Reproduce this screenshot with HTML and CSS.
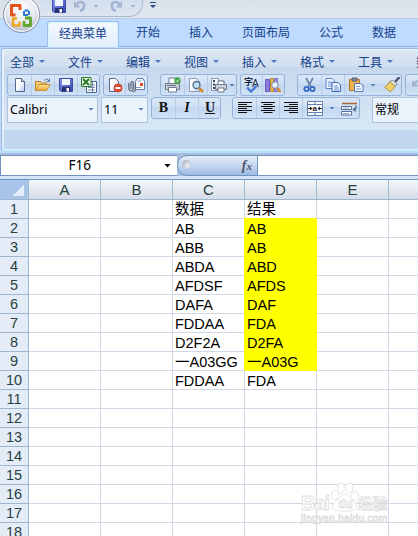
FILE: index.html
```html
<!DOCTYPE html>
<html lang="zh-CN">
<head>
    <meta charset="UTF-8">
    <meta name="viewport" content="width=device-width, initial-scale=1.0">
    <title>Excel</title>
    <link rel="stylesheet" href="styles.css">
</head>
<body>
    <!-- shared icons -->
    <svg class="defs">
        <defs>
            <linearGradient id="sheet" x1="0" y1="0" x2="1" y2="1"><stop offset=".4" stop-color="#fff"/><stop offset="1" stop-color="#b9cdea"/></linearGradient>
            <linearGradient id="blue" x1="0" y1="0" x2="1" y2="1"><stop offset="0" stop-color="#8c9cf0"/><stop offset="1" stop-color="#3444ac"/></linearGradient>
            <linearGradient id="gold" x1="0" y1="0" x2="0" y2="1"><stop offset="0" stop-color="#ffe9a0"/><stop offset="1" stop-color="#eaa32c"/></linearGradient>
            <radialGradient id="orb" cx=".5" cy=".35" r=".65"><stop offset="0" stop-color="#fff"/><stop offset=".6" stop-color="#e6e9ef"/><stop offset="1" stop-color="#a9b2c3"/></radialGradient>
        </defs>
        <symbol id="save" viewBox="0 0 16 16">
            <path d="M1.500 1.500h13v13H3l-1.500-1.500z" fill="url(#blue)" stroke="#3f4ba8"/>
            <path d="M4 2h8v6H4z" fill="#f1f5ff"/>
            <path d="M4 10h8v4.500H4z" fill="#26306f"/>
            <path d="M8.500 11h2.500v3.500H8.500z" fill="#fff"/>
        </symbol>
        <symbol id="undo" viewBox="0 0 16 16">
            <path d="M4 7c4-5 9-3 8 2q-.5 3-4 4" fill="none" stroke="#a3b5d2" stroke-width="2.500"/>
            <path d="M2 3v6.500h6.500z" fill="#a3b5d2"/>
        </symbol>
    </svg>

    <div class="title-bar">
        <div class="quick-access">
            <svg width="16" height="16"><use href="#save"/></svg>
            <svg class="undo" width="16" height="16"><use href="#undo"/></svg>
            <i class="arrow pale"></i>
            <svg class="redo" width="16" height="16"><use href="#undo"/></svg>
            <i class="arrow pale"></i>
        </div>
        <i class="arrow customize"></i>
    </div>
    <svg class="office-button" width="42" height="36" viewBox="0 0 42 36">
        <circle cx="21.500" cy="14.500" r="18" fill="url(#orb)" stroke="#8290aa"/>
        <circle cx="21.500" cy="14.500" r="16.700" fill="none" stroke="#fff" stroke-width="1.200"/>
        <g fill="none" stroke-linejoin="round">
            <path d="M15.500 15h-4V5.500H20V10" stroke="#e2501c" stroke-width="3"/>
            <path d="M24 15v-4.500h5V15z" stroke="#2f78d0" stroke-width="2" stroke-dasharray="4 1"/>
            <path d="M17 18.500h-4v7h6.500v-4" stroke="#f0a51e" stroke-width="2.400"/>
            <path d="M24 21v4.500h6.500V18H25" stroke="#5fa52e" stroke-width="2.800"/>
        </g>
    </svg>

    <div class="tabs">
        <div class="tab active">经典菜单</div>
        <div class="tab">开始</div>
        <div class="tab">插入</div>
        <div class="tab">页面布局</div>
        <div class="tab">公式</div>
        <div class="tab">数据</div>
    </div>

    <div class="ribbon">
        <div class="panel">
            <div class="menus">
                <span>全部<i class="arrow"></i></span>
                <span>文件<i class="arrow"></i></span>
                <span>编辑<i class="arrow"></i></span>
                <span>视图<i class="arrow"></i></span>
                <span>插入<i class="arrow"></i></span>
                <span>格式<i class="arrow"></i></span>
                <span>工具<i class="arrow"></i></span>
                <span>数据</span>
            </div>
            <div class="toolbar">
                <div class="group file-group">
                    <b><svg width="16" height="16"><path d="M3.500 1.500h6l3 3v10h-9z" fill="url(#sheet)" stroke="#54698f"/><path d="M9.500 1.500v3h3" fill="#c8d8ef" stroke="#54698f"/></svg></b>
                    <b><svg width="16" height="16"><path d="M.5 13.500v-9h5l1 1.500h5v3" fill="#f5cd6c" stroke="#b68127"/><path d="M.8 13.500l3-6H15l-3.500 6z" fill="url(#gold)" stroke="#c9923a"/><path d="M9 3.500q3-3 5 .5m.5-2.500v3h-3" fill="none" stroke="#517ba9"/></svg></b>
                    <b><svg width="16" height="16"><use href="#save"/></svg></b>
                    <b><svg width="16" height="16"><path d="M5.500 4.500h10v11h-10z" fill="#fff" stroke="#4b6494"/><path d="M7 8h7M7 10.500h7M7 13h7M11.500 5v10" stroke="#7086ad"/><path d="M.5.5h9.500v9H.5z" fill="#e9f7e2" stroke="#327634"/><path d="M2 2l6 6M8 2L2 8" stroke="#267a29" stroke-width="2"/></svg></b>
                </div>
                <div class="group mail-group">
                    <b><svg width="16" height="16"><path d="M2.500 1.500h6l3 3v10h-9z" fill="url(#sheet)" stroke="#54698f"/><circle cx="11" cy="11" r="4" fill="#df4b31" stroke="#c8452a"/><path d="M8.500 11h5" stroke="#fff" stroke-width="2"/></svg></b>
                    <b><svg width="18" height="16"><path d="M8.500 4.500L10 1.500h6l1.500 3v8h-9z" fill="#f8fafe" stroke="#6580ac"/><path d="M10.500 4h4M9 10.500h5" stroke="#8397b8"/><path d="M13 6h3v3h-3z" fill="#d6502a"/><path d="M1.800 6v6q2 4 4.500 0V5.500q-1-2-2.300 0V12M8.300 7v6q-1 2-2.500 1.500" fill="none" stroke="#5b6470" stroke-width="1.200"/></svg></b>
                </div>
                <div class="group print-group">
                    <b><svg width="18" height="16"><path d="M5 1h8v6H5z" fill="#fff" stroke="#6c7a90"/><path d="M1.500 6.500h14v6h-14z" fill="#c8cdd6" stroke="#6d7a8e"/><path d="M4.500 10.500h8v4.500h-8z" fill="#fff" stroke="#6d7a8e"/><path d="M3 8.500h9" stroke="#6c7584"/><circle cx="13.500" cy="3.500" r="3.200" fill="#46a646"/><path d="M12 3.500l1.200 1.200 2-2.400" fill="none" stroke="#fff"/></svg></b>
                    <b><svg width="16" height="16"><path d="M1.500 1.500h7l3 3v10h-10z" fill="url(#sheet)" stroke="#8b9dbb"/><circle cx="8.500" cy="8" r="3.500" fill="#c4e2f5" stroke="#526a8a" stroke-width="1.300"/><path d="M11 11l4 4" stroke="#d98628" stroke-width="2.500"/></svg></b>
                    <b><svg width="18" height="16"><path d="M1.500 1.500h7v12h-7z" fill="#fff" stroke="#8b9ab5"/><path d="M3 4h2M3 7.500h2M3 11h2" stroke="#35435b" stroke-width="2"/><path d="M8 4h6v4H8z" fill="#fff" stroke="#5c6b82"/><path d="M5.500 7.500h11v5h-11z" fill="#cbd1db" stroke="#6d7a8e"/><path d="M8 11h6v4H8z" fill="#fff" stroke="#6d7a8e"/></svg></b>
                    <i class="arrow"></i>
                </div>
                <div class="group spell-group">
                    <b><svg width="18" height="16"><text x="1" y="8" class="glyph">字</text><text x="9" y="10" class="glyph latin">A</text><path d="M4 10.500l4 4L13.500 9" fill="none" stroke="#4478d4" stroke-width="2.400"/></svg></b>
                    <b><svg width="16" height="16"><path d="M.5 2.500h4v12h-4z" fill="#8f7be0" stroke="#6d5cc0"/><path d="M5.500 1.500h3v13h-3z" fill="#e8b84e" stroke="#b98d3a"/><path d="M9.500 1.500h3v13h-3z" fill="#a99bdf" stroke="#7a6bc0"/><circle cx="10" cy="8" r="3.300" fill="#e4f2fb" stroke="#7a8ba5"/><path d="M12.500 11l3 4" stroke="#db892a" stroke-width="2.400"/></svg></b>
                </div>
                <div class="group clip-group">
                    <b><svg width="16" height="16"><path d="M4 1l5 9M11 1L6 10" stroke="#6b83a8" stroke-width="1.700"/><circle cx="4.500" cy="12" r="2.200" fill="none" stroke="#2f68c6" stroke-width="1.700"/><circle cx="10.500" cy="12" r="2.200" fill="none" stroke="#2f68c6" stroke-width="1.700"/></svg></b>
                    <b><svg width="16" height="16"><path d="M1 1.500h6l2.500 2.500v7.500H1z" fill="#eef4ff" stroke="#577fc4"/><path d="M3 5h4M3 7h4M3 9h4" stroke="#6d91cd"/><path d="M7 5.500h6l2.500 2.500v6.500H7z" fill="#eef4ff" stroke="#3969b7"/><path d="M9 9h4M9 11h5M9 13h5" stroke="#6d91cd"/></svg></b>
                    <b><svg width="16" height="16"><path d="M1.500 2.500h10v11h-10z" fill="#eeb34a" stroke="#ab762a"/><path d="M4 1h5v3H4z" fill="#7d8797" stroke="#5b6473"/><path d="M6.500 6.500h6l2.500 2v6H6.500z" fill="#f5f8ff" stroke="#5676af"/><path d="M8 9.500h4M8 12h5" stroke="#7c96c5"/></svg></b>
                    <i class="arrow"></i>
                    <b><svg width="16" height="16"><path d="M15.500 0l-4.500 5" stroke="#5a5675" stroke-width="2.500"/><path d="M8 3l5 4-1.500 2-5.500-4z" fill="#eef1f6" stroke="#7d8797"/><path d="M5.500 4.500l5.500 4.500q-2 4-5 6-1-2-5.500-4.500 3.500-2 5-6z" fill="#edd36a" stroke="#b09545"/></svg></b>
                </div>
                <div class="group undo-group">
                    <b><svg width="16" height="16"><use href="#undo"/></svg></b>
                </div>
            </div>
            <div class="toolbar second">
                <div class="combo font-name">Calibri<i class="arrow"></i></div>
                <div class="combo font-size">11<i class="arrow"></i></div>
                <div class="group style-group">
                    <b class="bold">B</b>
                    <b class="italic">I</b>
                    <b class="underline">U</b>
                </div>
                <div class="group align-group">
                    <b><svg width="14" height="12"><path d="M0 .5h14M0 2.500h9M0 4.500h14M0 6.500h9M0 8.500h14M0 10.500h9" stroke="#111"/></svg></b>
                    <b><svg width="14" height="12"><path d="M0 .5h14M2.500 2.500h9M0 4.500h14M2.500 6.500h9M0 8.500h14M2.500 10.500h9" stroke="#111"/></svg></b>
                    <b><svg width="14" height="12"><path d="M0 .5h14M5 2.500h9M0 4.500h14M5 6.500h9M0 8.500h14M5 10.500h9" stroke="#111"/></svg></b>
                    <b class="merge"><svg width="16" height="15"><path d="M.5.5h15v14H.5z" fill="#fff" stroke="#6280b4"/><path d="M0 3.500h16M0 11.500h16M8 0v3.500M8 11.500V15" stroke="#6280b4"/><path d="M1 7.500h4M11 7.500h4" stroke="#222"/><path d="M3 5.500v4l2.500-2zM13 5.500v4l-2.500-2z" fill="#222"/><text x="5.600" y="10" class="merge-a">a</text></svg></b>
                    <i class="arrow"></i>
                    <b><svg width="17" height="15"><path d="M1 2.500h15" stroke="#a96a38" stroke-width="1.500"/><path d="M.5 5.500h10v3H.5zM.5 10.500h10v3.500H.5z" fill="#fff" stroke="#56719d"/><path d="M2 7h6M2 12.500h6" stroke="#93a8cb"/><path d="M15 4v4h-2" fill="none" stroke="#4d6389"/><path d="M11.500 8.500l3-2.500v5z" fill="#4d6389"/></svg></b>
                </div>
                <div class="combo number-format">常规</div>
            </div>
        </div>
        <div class="panel-caption"></div>
    </div>

    <div class="formula-bar">
        <div class="name-box"><span>F16</span><i class="arrow black"></i></div>
        <div class="fx"><span class="knob"></span><span class="fx-label">f<small>x</small></span></div>
        <div class="formula-input"></div>
    </div>

    <table class="sheet">
        <colgroup><col class="num"><col><col><col><col><col><col></colgroup>
        <tr class="head"><th class="corner"></th><th>A</th><th>B</th><th>C</th><th>D</th><th>E</th><th></th></tr>
        <tr class="cn"><th>1</th><td></td><td></td><td>数据</td><td>结果</td><td></td><td></td></tr>
        <tr><th>2</th><td></td><td></td><td>AB</td><td class="hl">AB</td><td></td><td></td></tr>
        <tr><th>3</th><td></td><td></td><td>ABB</td><td class="hl">AB</td><td></td><td></td></tr>
        <tr><th>4</th><td></td><td></td><td>ABDA</td><td class="hl">ABD</td><td></td><td></td></tr>
        <tr><th>5</th><td></td><td></td><td>AFDSF</td><td class="hl">AFDS</td><td></td><td></td></tr>
        <tr><th>6</th><td></td><td></td><td>DAFA</td><td class="hl">DAF</td><td></td><td></td></tr>
        <tr><th>7</th><td></td><td></td><td>FDDAA</td><td class="hl">FDA</td><td></td><td></td></tr>
        <tr><th>8</th><td></td><td></td><td>D2F2A</td><td class="hl">D2FA</td><td></td><td></td></tr>
        <tr><th>9</th><td></td><td></td><td>一A03GG</td><td class="hl">一A03G</td><td></td><td></td></tr>
        <tr><th>10</th><td></td><td></td><td>FDDAA</td><td>FDA</td><td></td><td></td></tr>
        <tr><th>11</th><td></td><td></td><td></td><td></td><td></td><td></td></tr>
        <tr><th>12</th><td></td><td></td><td></td><td></td><td></td><td></td></tr>
        <tr><th>13</th><td></td><td></td><td></td><td></td><td></td><td></td></tr>
        <tr><th>14</th><td></td><td></td><td></td><td></td><td></td><td></td></tr>
        <tr><th>15</th><td></td><td></td><td></td><td></td><td></td><td></td></tr>
        <tr><th>16</th><td></td><td></td><td></td><td></td><td></td><td></td></tr>
        <tr><th>17</th><td></td><td></td><td></td><td></td><td></td><td></td></tr>
        <tr><th>18</th><td></td><td></td><td></td><td></td><td></td><td></td></tr>
    </table>

    <svg class="watermark" width="92" height="46" viewBox="0 0 92 46">
        <g class="wm">
            <text x="1" y="30" class="wm-big" textLength="29">Bai</text>
            <ellipse cx="35" cy="15" rx="3.500" ry="4.500"/>
            <ellipse cx="41" cy="8" rx="3.300" ry="5"/>
            <ellipse cx="49.500" cy="8" rx="3.300" ry="5"/>
            <ellipse cx="55" cy="15.500" rx="3.500" ry="4.500"/>
            <path d="M45 14q3 0 6 4.500l5 5.500q2 7-5 7H38q-7 0-5-7l6-5.500q3-4.500 6-4.500z"/>
            <text x="38" y="28" class="wm-du">du</text>
            <text x="58" y="29" class="wm-cn">经验</text>
            <text x="1" y="42" class="wm-url" textLength="86">jingyan.baidu.com</text>
        </g>
    </svg>
</body>
</html>
```

FILE: styles.css
```css
*{box-sizing: border-box;}
body{
    margin: 0;
    width: 418px;
    height: 536px;
    overflow: hidden;
    position: relative;
    background-color: #fff;
    font-family: "Liberation Sans", "Noto Sans CJK SC", sans-serif;
    font-size: 12px;
    color: #15428b;
}
svg{display: block; flex: none;}
.defs{position: absolute; width: 0; height: 0;}
.arrow{
    flex: none;
    width: 6px;
    height: 3px;
    background-color: #4f7cbc;
    clip-path: polygon(0 0, 100% 0, 50% 100%);
}
.arrow.pale{background-color: #a0abbc;}
.arrow.black{width: 7px; height: 4px; background-color: #000;}

/* title bar */
.title-bar{
    display: flex;
    height: 19px;
    background: linear-gradient(#d9e0ea, #e1e7ef);
    border-bottom: 1px solid #b9cbe2;
}
.quick-access{
    display: flex;
    align-items: center;
    width: 103px;
    height: 17px;
    margin-left: 40px;
    padding: 0 0 4px 11px;
    background: linear-gradient(#d3deed, #dce5f1);
    border: solid #a9b9d0;
    border-width: 0 1px 1px 0;
    border-radius: 0 0 14px 0;
}
.quick-access .undo{margin: 0 5px 0 5px;}
.quick-access .redo{margin: 0 6px 0 9px; transform: scaleX(-1);}
.arrow.customize{
    width: 6px;
    height: 6px;
    margin: 2px 0 0 7px;
    background-color: #2d4c85;
    clip-path: polygon(0 0, 100% 0, 100% 17%, 0 17%, 0 50%, 100% 50%, 50% 100%, 0 50%);
}
.office-button{position: absolute; left: 0; top: 0;}

/* tabs */
.tabs{
    display: flex;
    height: 28px;
    padding: 2px 0 0 47px;
    background-color: #bfdbff;
    border-bottom: 1px solid #8db2e3;
}
.tab{
    height: 25px;
    padding: 0 14.5px;
    line-height: 25px;
    white-space: nowrap;
}
.tab.active{
    width: 72px;
    height: 26px;
    margin-right: 2.5px;
    padding: 0 0 0 11px;
    line-height: 24px;
    background: linear-gradient(#f4f9ff, #e1edfb);
    border: 1px solid #96bfe9;
    border-bottom: none;
    border-radius: 3px 3px 0 0;
    box-shadow: inset 1px 1px 0 #d7f5fc, inset -1px 0 0 #d7f5fc;
}

/* ribbon */
.ribbon{
    height: 106px;
    padding: 1px 0 0 1px;
    background-color: #bfdbff;
}
.panel{
    height: 82px;
    padding-left: 6px;
    border: solid #9ebbdd;
    border-width: 1px 0 0 1px;
    border-radius: 3px 0 0 0;
    box-shadow: inset 2px 1px 0 #e8f2fc;
    background: linear-gradient(#dce7f4 0, #d1dfef 17px, #c7d8ed 18px, #d8e7f5 100%);
    overflow: hidden;
}
.panel-caption{
    height: 21px;
    border-left: 1px solid #9ebbdd;
    border-bottom: 1px solid #b9f0f5;
    border-radius: 0 0 0 3px;
    background-color: #c1d8f0;
    box-shadow: inset 2px -1px 0 #dceffb;
}
.menus{display: flex; height: 25px; padding-left: 2px;}
.menus span{
    display: flex;
    flex: none;
    align-items: center;
    gap: 5px;
    width: 58px;
}
.toolbar{display: flex; height: 23px; margin-left: -1px;}
.group{
    display: flex;
    flex: none;
    align-items: center;
    height: 22px;
    border: 1px solid #94b2da;
    border-radius: 3px;
    background: linear-gradient(#dae7f7 0, #cfdff3 45%, #c2d6ef 46%, #d1e2f6 100%);
}
.group b{
    display: flex;
    flex: none;
    align-items: center;
    justify-content: center;
    width: 23px;
    height: 20px;
}
.group b + b{border-left: 1px solid #b6cce8;}
.file-group{width: 93px;}
.mail-group{width: 45px; margin-left: 3px;}
.mail-group b{width: 21px;}
.print-group{width: 77px; margin-left: 12px;}
.print-group .arrow{margin-left: -1px;}
.spell-group{width: 45px; margin-left: 3px;}
.spell-group b{width: 21px;}
.clip-group{width: 105px; margin-left: 12px;}
.clip-group .arrow{margin: 0 4px 0 3px;}
.undo-group{margin-left: 3px;}
.glyph{font-size: 9px; font-weight: bold; fill: #1c2742;}
.latin{font-size: 10px; font-weight: normal;}

.combo{
    display: flex;
    flex: none;
    align-items: center;
    justify-content: space-between;
    height: 26px;
    padding: 0 3px 2px 2px;
    border: 1px solid #abc1de;
    background-color: #eaf2fb;
    color: #000;
    font-family: "Noto Sans", "Noto Sans CJK SC", sans-serif;
    font-size: 12px;
}
.font-name{width: 91px; font-size: 12.5px;}
.font-size{width: 47px; margin-left: 3px; font-size: 12.5px;}
.style-group{
    width: 70px;
    margin-left: 3px;
    font-family: "Liberation Serif", serif;
    font-size: 14px;
    color: #111;
}
.italic{font-style: italic;}
.underline{text-decoration: underline;}
.align-group{width: 128px; margin-left: 11px;}
.align-group .merge{width: 24px;}
.align-group .arrow{margin: 0 3px 0 3px;}
.merge-a{font: bold 8px "Liberation Sans", sans-serif; fill: #222;}
.number-format{width: 60px; margin-left: 12px;}

/* formula bar */
.formula-bar{
    display: flex;
    height: 26px;
    padding-top: 2px;
    border-bottom: 3px solid #d4e3f5;
    background-color: #a6bfdf;
}
.name-box{
    display: flex;
    align-items: center;
    justify-content: flex-end;
    gap: 73px;
    width: 177px;
    height: 21px;
    padding-right: 6px;
    border: 1px solid #6f93bf;
    border-right: none;
    background-color: #fff;
    color: #000;
    font-family: "Noto Sans", sans-serif;
    font-size: 13.5px;
    line-height: 18px;
}
.name-box span{margin-top: -1px;}
.fx{
    display: flex;
    align-items: center;
    justify-content: space-between;
    width: 81px;
    height: 21px;
    padding: 0 5px 0 4px;
    border: 1px solid #6f93bf;
    border-radius: 10px 0 0 10px;
    background: linear-gradient(#e6eefa, #c6d7f0 50%, #9db9e2);
}
.knob{
    width: 9px;
    height: 9px;
    margin-top: -2px;
    border-radius: 50%;
    background: radial-gradient(circle at 65% 65%, #f2f2f4, #9aa6b8);
}
.fx-label{
    font: italic bold 14px "Liberation Serif", serif;
    color: #4d5666;
}
.fx-label small{font-size: 11px;}
.formula-input{flex: 1; height: 21px; border: solid #6f93bf; border-width: 1px 0; background-color: #fff;}

/* sheet */
.sheet{
    width: 461px;
    table-layout: fixed;
    border-spacing: 0;
    font-size: 14.5px;
    line-height: 18px;
    color: #000;
}
.sheet col{width: 72px;}
.sheet col.num{width: 29px;}
.sheet th, .sheet td{
    height: 19px;
    padding: 0 0 0 2px;
    border: solid #d0d7e5;
    border-width: 0 1px 1px 0;
    white-space: nowrap;
    text-align: left;
    vertical-align: top;
}
.sheet tr{height: 19px;}
.sheet td{padding-top: 2px; line-height: 16px;}
.sheet .cn td{padding-top: 0; line-height: 18px;}
.sheet th{
    padding: 0;
    border-color: #9eb6ce;
    background-color: #e4ecf7;
    color: #27413e;
    font-weight: normal;
    text-align: center;
}
.sheet .head th{
    height: 21px;
    border-top: 1px solid #6f93bf;
    background: linear-gradient(#f5f8fb, #d5dce8);
    font-size: 15px;
    line-height: 19px;
}
.sheet .head .corner{
    background: linear-gradient(135deg, transparent 50%, #e3ecf9 50%) 13px 5px / 11px 11px no-repeat, #a9c4e9;
}
.sheet .hl{
    background-color: #ff0;
    border-color: #ff0;
    box-shadow: -1px -1px 0 #ff0;
}

/* watermark */
.watermark{position: absolute; left: 300px; top: 480px;}
.wm{fill: #fff; stroke: #dedede; stroke-width: .8px;}
.wm-big{font: bold 20px "Liberation Sans", sans-serif;}
.wm-du{font: bold 12px "Liberation Sans", sans-serif;}
.wm-cn{font: bold 15px "Noto Sans CJK SC", sans-serif;}
.wm-url{font: 10px "Liberation Sans", sans-serif;}
```
